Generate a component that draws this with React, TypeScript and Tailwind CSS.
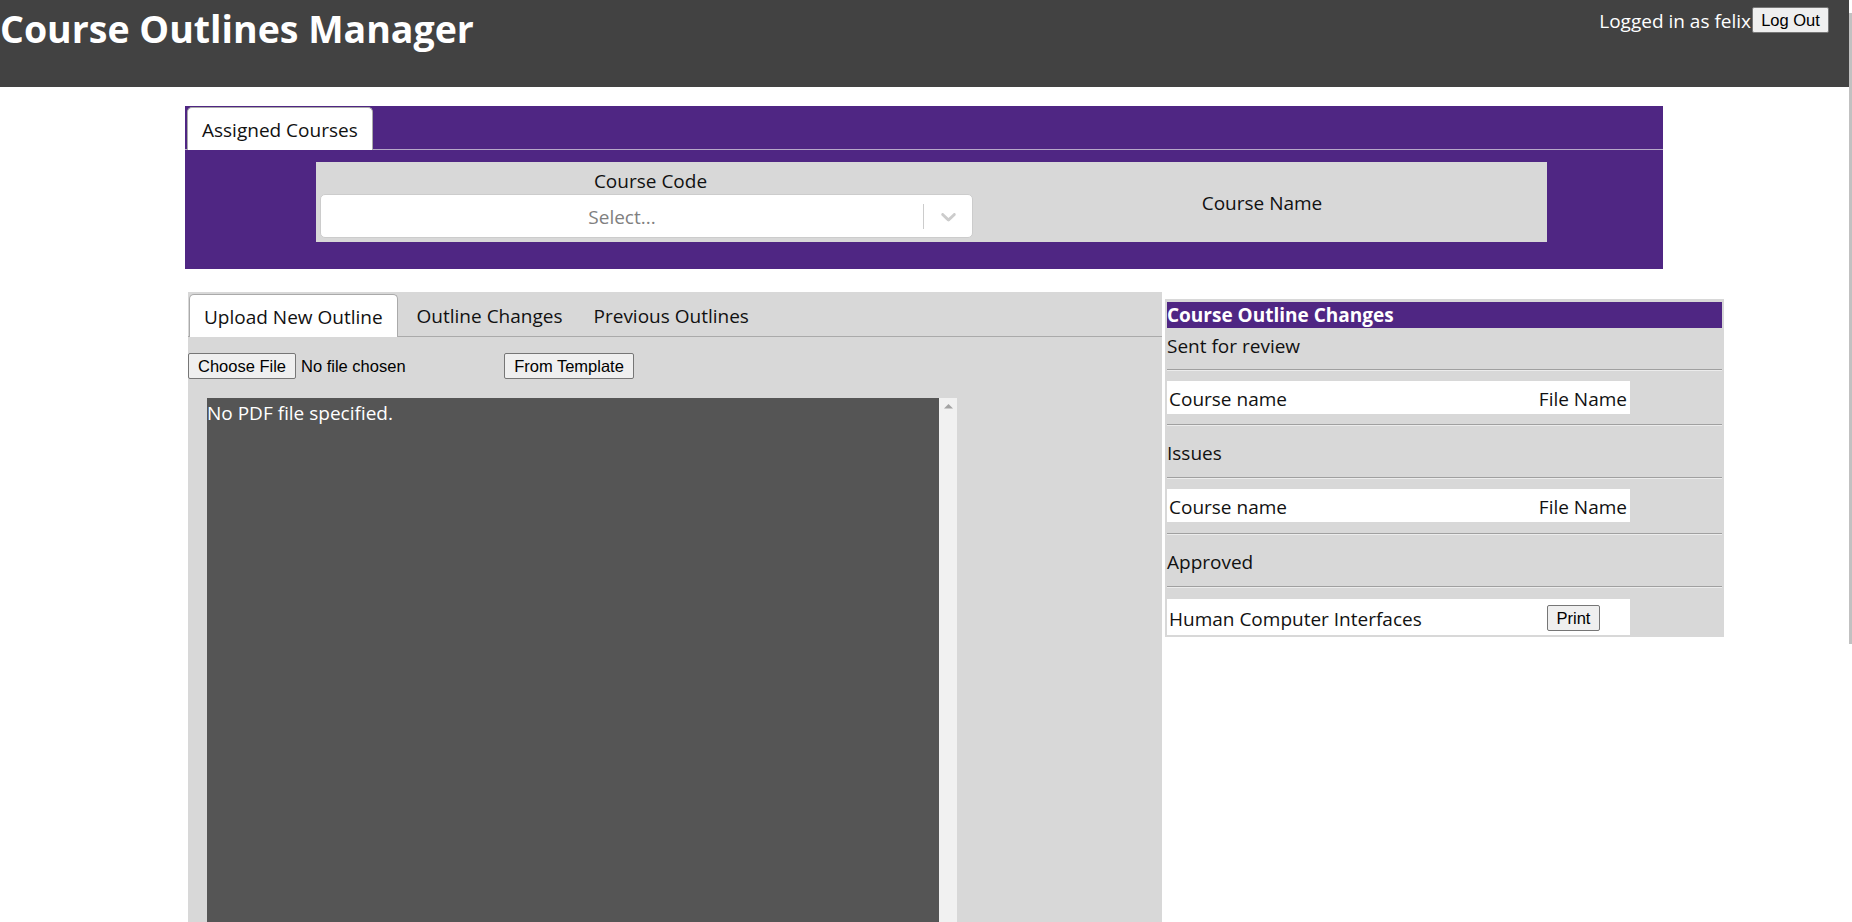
import React from 'react';

const PURPLE = 'bg-[#4f2683]';

function Chevron() {
  return (
    <svg viewBox="0 0 20 20" width={25} height={25} className="fill-[#cccccc]">
      <path d="M4.516 7.548c0.436-0.446 1.043-0.481 1.576 0l3.908 3.747 3.908-3.747c0.533-0.481 1.141-0.446 1.574 0 0.436 0.445 0.408 1.197 0 1.615-0.406 0.418-4.695 4.502-4.695 4.502-0.217 0.223-0.502 0.335-0.787 0.335s-0.57-0.112-0.789-0.335c0 0-4.287-4.084-4.695-4.502s-0.436-1.17 0-1.615z" />
    </svg>
  );
}

function NativeButton({ children, className = '' }: { children: React.ReactNode; className?: string }) {
  return (
    <button
      className={`h-[26px] px-[7px] bg-[#efefef] border border-[#767676] rounded-[2px] text-[16.5px] leading-none text-black font-['Liberation_Sans',Arial,sans-serif] ${className}`}
    >
      {children}
    </button>
  );
}

function Hr() {
  return (
    <div className="h-[2px] border-t border-[#a0a0a0] border-b border-b-[#ececec]" />
  );
}

function FileRow({ left, right }: { left: string; right: string }) {
  return (
    <div className="w-[463px] h-[33px] bg-white flex items-center justify-between pl-[2px] pr-[3px] pt-[4px]">
      <span>{left}</span>
      <span>{right}</span>
    </div>
  );
}

export default function App() {
  return (
    <div className="relative w-[1852px] h-[922px] overflow-hidden bg-white text-[19px] text-[#111] font-['Open_Sans',sans-serif]">
      {/* top bar */}
      <header className="h-[87px] w-[1849px] bg-[#424242] flex justify-between">
        <h1 className="pt-[5px] text-[37.5px] leading-[48px] font-bold text-white">Course Outlines Manager</h1>
        <div className="flex items-start pt-[7px] pr-[20px]">
          <span className="text-white leading-[26px] pt-[1px]">Logged in as felix</span>
          <NativeButton className="ml-[1px] w-[77px]">Log Out</NativeButton>
        </div>
      </header>

      {/* assigned courses */}
      <section className={`mt-[19px] ml-[185px] w-[1478px] h-[163px] ${PURPLE}`}>
        <div className="h-[44px] border-b border-[#b6a8c8] pl-[2px] pt-[1px] flex">
          <div className="h-[43px] px-[14px] pt-[3px] bg-white border border-[#aaa] border-b-0 rounded-t-[5px] flex items-center">
            Assigned Courses
          </div>
        </div>
        <div className="mt-[12px] ml-[131px] w-[1231px] h-[80px] bg-[#d8d8d8] flex">
          <div className="w-[661px] pl-[4px] pt-[5px]">
            <div className="h-[27px] leading-[27px] text-center pl-[4px] pt-[1px]">Course Code</div>
            <div className="w-[653px] h-[44px] bg-white border border-[#cccccc] rounded-[5px] flex items-center">
              <div className="flex-1 text-center text-[#808080] pt-[3px]">Select...</div>
              <div className="w-px h-[25px] bg-[#cccccc]" />
              <div className="w-[48px] flex justify-center">
                <Chevron />
              </div>
            </div>
          </div>
          <div className="flex-1 flex items-center justify-center pt-[3px]">Course Name</div>
        </div>
      </section>

      {/* workspace */}
      <div className="mt-[23px] flex items-start">
        <div className="ml-[188px] w-[974px] h-[700px] bg-[#d8d8d8]">
          <div className="h-[45px] pt-[2px] pl-[1px] border-b border-[#aaa] flex">
            <div className="h-[43px] px-[14px] pt-[2px] bg-white border border-[#aaa] border-b-0 rounded-t-[5px] flex items-center">
              Upload New Outline
            </div>
            <div className="h-[43px] px-[19px] pt-[2px] flex items-center">Outline Changes</div>
            <div className="h-[43px] px-[12px] pt-[2px] flex items-center">Previous Outlines</div>
          </div>

          <div className="mt-[16px] flex items-center">
            <div className="w-[316px] flex items-center">
              <NativeButton className="w-[108px]">Choose File</NativeButton>
              <span className="ml-[5px] text-[16.5px] text-black font-['Liberation_Sans',Arial,sans-serif]">No file chosen</span>
            </div>
            <NativeButton className="w-[130px]">From Template</NativeButton>
          </div>

          <div className="mt-[19px] ml-[19px] w-[750px] h-[560px] flex">
            <div className="w-[732px] bg-[#555555] text-white leading-[28px] pt-[1px]">No PDF file specified.</div>
            <div className="w-[18px] bg-[#f1f1f1] flex justify-center pt-[5px]">
              <svg width="9" height="6" viewBox="0 0 9 6" className="fill-[#a3a3a3]">
                <path d="M0 5.5 L4.5 1 L9 5.5 Z" />
              </svg>
            </div>
          </div>
        </div>

        <aside className="ml-[3px] mt-[7px] w-[559px] bg-[#d8d8d8] px-[2px] pt-[3px] pb-[2px]">
          <div className={`h-[26px] ${PURPLE} text-white font-bold leading-[26px]`}>Course Outline Changes</div>
          <div className="h-[41px] pt-[4px] leading-[28px]">Sent for review</div>
          <Hr />
          <div className="h-[10px]" />
          <FileRow left="Course name" right="File Name" />
          <div className="h-[10px]" />
          <Hr />
          <div className="h-[51px] pt-[13px] leading-[28px]">Issues</div>
          <Hr />
          <div className="h-[10px]" />
          <FileRow left="Course name" right="File Name" />
          <div className="h-[11px]" />
          <Hr />
          <div className="h-[51px] pt-[13px] leading-[28px]">Approved</div>
          <Hr />
          <div className="h-[11px]" />
          <div className="w-[463px] h-[36px] bg-white flex items-center pl-[2px] pt-[2px]">
            <span className="w-[378px] pt-[2px]">Human Computer Interfaces</span>
            <NativeButton className="w-[53px]">Print</NativeButton>
          </div>
        </aside>
      </div>

      {/* page scrollbar thumb peeking at the right edge */}
      <div className="absolute right-0 top-[13px] w-[3px] h-[631px] bg-[#c1c1c1]" />
    </div>
  );
}
